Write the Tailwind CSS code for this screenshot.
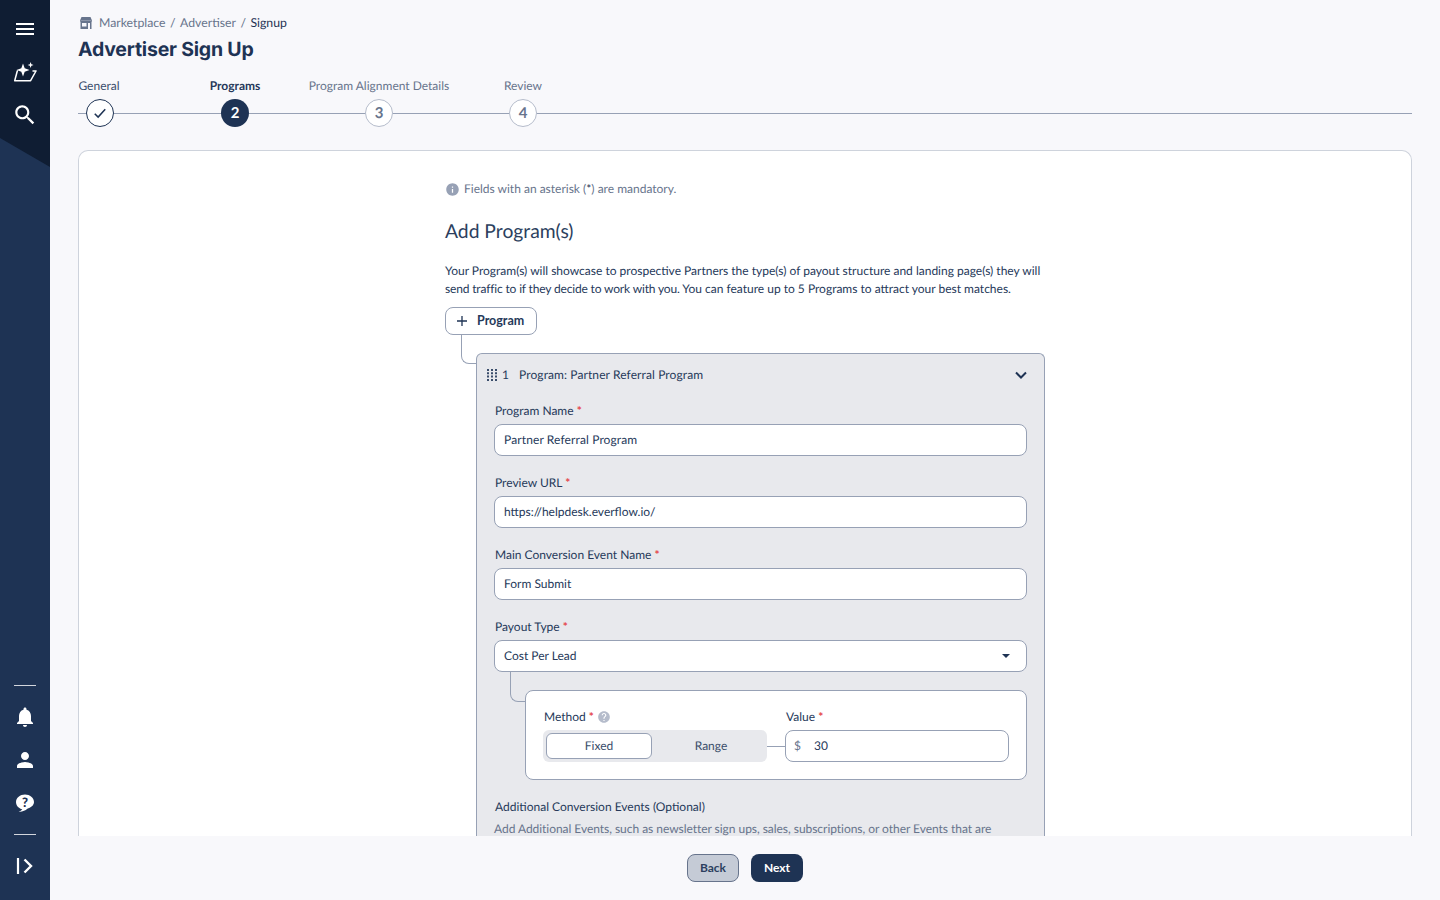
<!DOCTYPE html>
<html lang="en">
<head>
  <meta charset="UTF-8" />
  <title>Advertiser Sign Up</title>
  <script src="https://cdn.jsdelivr.net/npm/@tailwindcss/browser@4"></script>
</head>
<body class="bg-[#f8f8fb] text-[#26395a] font-['Lato',sans-serif] text-[12px] [text-rendering:geometricPrecision] overflow-hidden">
<div class="flex h-[900px] w-[1440px]">

  <!-- sidebar -->
  <aside class="relative w-[50px] shrink-0 bg-[#1e3354] flex flex-col items-center text-white">
    <div class="absolute top-0 left-0 w-[50px] h-[167px] bg-[#0f1d33] [clip-path:polygon(0_0,100%_0,100%_100%,0_138px)]"></div>
    <div class="relative flex flex-col items-center pt-[17px] gap-[19px]">
      <svg class="w-6 h-6" viewBox="0 0 24 24" fill="currentColor"><path d="M3 18h18v-2H3v2zm0-5h18v-2H3v2zm0-7v2h18V6H3z"/></svg>
      <svg class="w-6 h-6" viewBox="0 0 24 24" fill="none" stroke="currentColor" stroke-width="1.500" stroke-linejoin="round"><path d="M5 11H4.300L1.700 20.700H17.600L23 11H19.500"/><path fill="currentColor" stroke="none" d="M10 3.500 11.700 8.300 16.500 10 11.700 11.700 10 16.500 8.300 11.700 3.500 10 8.300 8.300Z"/><path fill="currentColor" stroke="none" d="M17.600 2 18.400 4.200 20.600 5 18.400 5.800 17.600 8 16.800 5.800 14.600 5 16.800 4.200Z"/></svg>
      <svg class="w-[26px] h-[26px] -my-[1px]" viewBox="0 0 24 24" fill="currentColor"><path d="M15.500 14h-.79l-.28-.27C15.410 12.590 16 11.110 16 9.500 16 5.910 13.090 3 9.500 3S3 5.910 3 9.500 5.910 16 9.500 16c1.610 0 3.090-.59 4.230-1.570l.27.28v.79l5 4.990L20.490 19l-4.990-5zm-6 0C7.010 14 5 11.990 5 9.500S7.010 5 9.500 5 14 7.010 14 9.500 11.990 14 9.500 14z"/></svg>
    </div>
    <div class="relative mt-auto flex flex-col items-center pb-[22px]">
      <div class="w-[22px] h-px bg-white/80 mb-[19px]"></div>
      <svg class="w-6 h-6" viewBox="0 0 24 24" fill="currentColor"><path d="M12 22c1.100 0 2-.9 2-2h-4c0 1.100.89 2 2 2zm6-6v-5c0-3.070-1.640-5.640-4.500-6.320V4c0-.83-.67-1.500-1.500-1.500s-1.500.67-1.500 1.500v.68C7.630 5.360 6 7.920 6 11v5l-2 2v1h16v-1l-2-2z"/></svg>
      <svg class="w-6 h-6 mt-[19px]" viewBox="0 0 24 24" fill="currentColor"><path d="M12 12c2.210 0 4-1.790 4-4s-1.790-4-4-4-4 1.790-4 4 1.790 4 4 4zm0 2c-2.670 0-8 1.340-8 4v2h16v-2c0-2.660-5.330-4-8-4z"/></svg>
      <svg class="w-6 h-6 mt-[19px]" viewBox="0 0 24 24"><path fill="currentColor" d="M12 3.500c-4.900 0-9 3.200-9 7.500 0 3.600 2.700 6.500 6.300 7.300-.7 1-2.100 1.900-3.800 2.300 3.500.3 7-.9 8.800-2.800 3.300-1 6.700-3.400 6.700-6.800 0-4.300-4.100-7.500-9-7.500z"/><text x="12" y="16" text-anchor="middle" font-size="13" font-weight="900" fill="#1e3354" font-family="Lato">?</text></svg>
      <div class="w-[22px] h-px bg-white/80 mt-[19px] mb-[19px]"></div>
      <svg class="w-6 h-6" viewBox="0 0 24 24" fill="none" stroke="currentColor"><path stroke-width="2.200" d="M5 4v16"/><path stroke-width="2.400" d="M11.500 5.500 18 12l-6.500 6.500"/></svg>
    </div>
  </aside>

  <!-- main -->
  <div class="flex-1 min-w-0 flex flex-col">
    <div class="h-[836px] overflow-hidden px-[28px]">
      <!-- breadcrumb -->
      <div class="flex items-center h-[14px] mt-[16px] pl-[1px] text-[#67748c] text-[12.250px] leading-none">
        <svg class="w-[14px] h-[14px] mr-[6px]" viewBox="0 0 14 14"><path fill="#67748c" d="M2.500 1h9l1.500 3.500v1h-.5V13H1.500V5.500H1v-1z"/><path fill="#f8f8fb" d="M3 7h4.500v3.500H3zM9 7h2v6H9zM1.500 4.700h11v.4h-11z"/></svg>
        <span>Marketplace</span><span class="mx-[4.500px]">/</span><span>Advertiser</span><span class="mx-[4.500px]">/</span><span class="text-[#1e3354]">Signup</span>
      </div>
      <h1 class="mt-[6px] text-[19.500px] leading-[26px] font-bold text-[#1e3354] font-['Inter',sans-serif] tracking-[-0.2px]">Advertiser Sign Up</h1>

      <!-- stepper -->
      <div class="relative mt-[15px] flex h-[50px]">
        <div class="absolute left-0 right-0 top-[36px] h-px bg-[#97a1b5]"></div>
        <div class="relative w-[44px] flex flex-col items-center">
          <span class="h-[22px] leading-[18px] whitespace-nowrap text-[#3a4d6b] -ml-[2px]">General</span>
          <span class="w-[28px] h-[28px] rounded-full bg-white border border-[#1e3354] flex items-center justify-center">
            <svg class="w-[18px] h-[18px]" viewBox="0 0 24 24" fill="none" stroke="#1e3354" stroke-width="2"><path d="M5 13l4.500 4.500L19 7"/></svg>
          </span>
        </div>
        <div class="relative w-[144px] ml-[41px] flex flex-col items-center">
          <span class="h-[22px] leading-[18px] font-bold">Programs</span>
          <span class="w-[28px] h-[28px] rounded-full bg-[#1e3354] text-white text-[15px] font-bold flex items-center justify-center">2</span>
        </div>
        <div class="relative w-[144px] flex flex-col items-center">
          <span class="h-[22px] leading-[18px] whitespace-nowrap text-[#67748c]">Program Alignment Details</span>
          <span class="w-[28px] h-[28px] rounded-full bg-white border border-[#b5bccb] text-[#67748c] text-[15px] font-bold flex items-center justify-center">3</span>
        </div>
        <div class="relative w-[144px] flex flex-col items-center">
          <span class="h-[22px] leading-[18px] text-[#67748c]">Review</span>
          <span class="w-[28px] h-[28px] rounded-full bg-white border border-[#b5bccb] text-[#67748c] text-[15px] font-bold flex items-center justify-center">4</span>
        </div>
      </div>

      <!-- card -->
      <div class="mt-[23px] bg-white border border-[#ced3dc] rounded-t-[10px] border-b-0 h-[800px] flex justify-center">
        <div class="w-[600px] pt-[29px]">
          <div class="flex items-center text-[#67748c] h-[18px]">
            <svg class="w-[15px] h-[15px] mr-[4px]" viewBox="0 0 24 24" fill="#97a1b5"><path d="M12 2C6.480 2 2 6.480 2 12s4.480 10 10 10 10-4.480 10-10S17.520 2 12 2zm1 15h-2v-6h2v6zm0-8h-2V7h2v2z"/></svg>
            <span>Fields with an asterisk (<span class="text-[#1e3354]">*</span>) are mandatory.</span>
          </div>
          <h2 class="mt-[22px] text-[19.300px] leading-[24px] text-[#2c3f5e]">Add Program(s)</h2>
          <p class="mt-[18px] leading-[18px]">Your Program(s) will showcase to prospective Partners the type(s) of payout structure and landing page(s) they will <span class="tracking-[-0.16px]">send traffic to if they decide to work with you.</span> You can feature up to 5 Programs to attract your best matches.</p>

          <button class="mt-[9px] w-[92px] h-[28px] bg-white border border-[#97a1b5] rounded-[8px] flex items-center pl-[9px] font-bold text-[12.500px]">
            <svg class="w-[14px] h-[14px] mr-[8px]" viewBox="0 0 14 14" stroke="#1e3354" stroke-width="1.300"><path d="M7 2v10M2 7h10"/></svg>Program
          </button>

          <div class="flex">
            <!-- connector -->
            <div class="ml-[16px] w-[15px] h-[29px] border-l border-b border-[#97a1b5] rounded-bl-[8px] shrink-0"></div>
            <!-- program panel -->
            <div class="mt-[18px] w-[569px] bg-[#e8e9ed] border border-[#97a1b5] rounded-t-[6px] border-b-0 px-[17px] h-[600px]">
              <div class="flex items-center h-[42px] -ml-[7px] -mr-[2px]">
                <svg class="w-[10px] h-[12px] mr-[5px]" viewBox="0 0 10 12" fill="#3a4d6b"><path d="M0 0h2v2H0zM4 0h2v2H4zM8 0h2v2H8zM0 3.300h2v2H0zM4 3.300h2v2H4zM8 3.300h2v2H8zM0 6.600h2v2H0zM4 6.600h2v2H4zM8 6.600h2v2H8zM0 9.900h2v2H0zM4 9.900h2v2H4zM8 9.900h2v2H8z"/></svg>
                <span class="w-[17px]">1</span>
                <span class="tracking-[0.1px]">Program: Partner Referral Program</span>
                <svg class="ml-auto w-[16px] h-[16px]" viewBox="0 0 16 16" fill="none" stroke="#1e3354" stroke-width="2"><path d="M3 5.500l5 5 5-5"/></svg>
              </div>

              <label class="block h-[18px] mt-[6px] pl-px leading-[18px]">Program Name <span class="text-[#e5484d] font-bold leading-none">*</span></label>
              <div class="mt-[4px] h-[32px] bg-white border border-[#97a1b5] rounded-[8px] px-[9px] flex items-center tracking-[0.12px]">Partner Referral Program</div>

              <label class="block h-[18px] mt-[18px] pl-px leading-[18px]">Preview URL <span class="text-[#e5484d] font-bold leading-none">*</span></label>
              <div class="mt-[4px] h-[32px] bg-white border border-[#97a1b5] rounded-[8px] px-[9px] flex items-center">https://helpdesk.everflow.io/</div>

              <label class="block h-[18px] mt-[18px] pl-px leading-[18px]">Main Conversion Event Name <span class="text-[#e5484d] font-bold leading-none">*</span></label>
              <div class="mt-[4px] h-[32px] bg-white border border-[#97a1b5] rounded-[8px] px-[9px] flex items-center">Form Submit</div>

              <label class="block h-[18px] mt-[18px] pl-px leading-[18px]">Payout Type <span class="text-[#e5484d] font-bold leading-none">*</span></label>
              <div class="mt-[4px] h-[32px] bg-white border border-[#97a1b5] rounded-[8px] px-[9px] flex items-center justify-between">
                <span>Cost Per Lead</span>
                <span class="mr-[7px] w-0 h-0 border-x-[4px] border-x-transparent border-t-[4px] border-t-[#1e3354]"></span>
              </div>

              <div class="flex">
                <div class="ml-[16px] w-[15px] h-[30px] border-l border-b border-[#97a1b5] rounded-bl-[8px] shrink-0"></div>
                <div class="mt-[18px] flex-1 h-[90px] bg-white border border-[#97a1b5] rounded-[8px] pl-[17px] pr-[17px] pt-[17px] flex">
                  <div class="w-[224px] shrink-0">
                    <div class="h-[18px] pl-px leading-[18px] flex items-center">Method&nbsp;<span class="text-[#e5484d] font-bold leading-none">*</span>
                      <svg class="w-[14px] h-[14px] ml-[3px]" viewBox="0 0 24 24" fill="#b5bccb"><path d="M12 2C6.480 2 2 6.480 2 12s4.480 10 10 10 10-4.480 10-10S17.520 2 12 2zm1 17h-2v-2h2v2zm2.070-7.750-.9.920C13.450 12.900 13 13.500 13 15h-2v-.5c0-1.100.45-2.100 1.170-2.830l1.240-1.260c.37-.36.59-.86.59-1.410 0-1.100-.9-2-2-2s-2 .9-2 2H8c0-2.210 1.790-4 4-4s4 1.790 4 4c0 .88-.36 1.680-.93 2.250z"/></svg>
                    </div>
                    <div class="mt-[4px] h-[32px] bg-[#e8e9ed] rounded-[6px] p-[3px] flex items-stretch">
                      <div class="w-[106px] shrink-0 bg-white border border-[#97a1b5] rounded-[6px] flex items-center justify-center text-[#3a4d6b]">Fixed</div>
                      <div class="flex-1 pl-[6px] flex items-center justify-center text-[#3a4d6b]">Range</div>
                    </div>
                  </div>
                  <div class="w-[18px] h-px bg-[#97a1b5] mt-[38px] shrink-0"></div>
                  <div class="flex-1">
                    <div class="h-[18px] pl-px leading-[18px]">Value <span class="text-[#e5484d] font-bold leading-none">*</span></div>
                    <div class="mt-[4px] h-[32px] border border-[#97a1b5] rounded-[8px] px-[8px] flex items-center">
                      <span class="w-[20px] text-[#67748c]">$</span><span>30</span>
                    </div>
                  </div>
                </div>
              </div>

              <div class="mt-[18px] h-[18px] pl-px leading-[18px]">Additional Conversion Events (Optional)</div>
              <p class="mt-[4px] leading-[18px] text-[#67748c] tracking-[-0.04px]">Add Additional Events, such as newsletter sign ups, sales, subscriptions, or other Events that are</p>
            </div>
          </div>
        </div>
      </div>
    </div>

    <!-- footer -->
    <div class="h-[64px] flex items-start justify-center gap-[12px] pt-[18px]">
      <button class="w-[52px] h-[28px] bg-[#c5cbd6] border border-[#67748c] rounded-[8px] font-bold text-[#2c3f5e]">Back</button>
      <button class="w-[52px] h-[28px] bg-[#1e3354] rounded-[8px] font-bold text-white">Next</button>
    </div>
  </div>
</div>
</body>
</html>
